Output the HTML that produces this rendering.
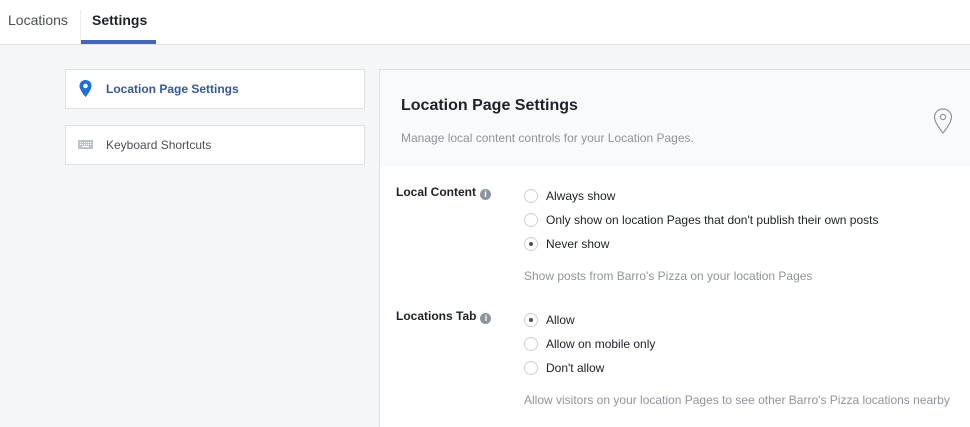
<!DOCTYPE html><html><head><style>
body{margin:0;width:970px;height:426px;overflow:hidden;background:#f5f6f7;font-family:"Liberation Sans",Arial,sans-serif;position:relative}
.a{position:absolute}
.top{left:0;top:0;width:970px;height:44px;background:#fff;border-bottom:1px solid #dddfe2}
.box{left:65px;width:298px;height:38px;background:#fff;border:1px solid #dddfe2}
.panel{left:379px;top:69px;width:591px;height:357px;background:#fff;border-left:1px solid #dddfe2;border-top:1px solid #dddfe2}
.hd{left:0;top:0;width:591px;height:97px;background:#f9fafb}
.r{width:12px;height:12px;border:1px solid #ccd0d5;border-radius:50%;background:#fff}
.r.on::after{content:"";position:absolute;left:4px;top:4px;width:4px;height:4px;border-radius:50%;background:#4b4f56}
.t{font-size:12px;color:#1d2129}
.g{font-size:12px;color:#90949c}
.lb{font-size:12px;font-weight:bold;color:#1d2129}
.i{display:inline-block;width:11px;height:11px;border-radius:50%;background:#8d949e;color:#fff;font-size:9px;text-align:center;line-height:11px;font-weight:bold;vertical-align:-1px;margin-left:4px}
</style></head><body>
<div class="a top"></div>
<div class="a" style="left:8px;top:12px;font-size:14px;color:#4b4f56">Locations</div>
<div class="a" style="left:80px;top:10px;width:1px;height:34px;background:#e9ebee"></div>
<div class="a" style="left:92px;top:12px;font-size:14px;font-weight:bold;color:#1d2129">Settings</div>
<div class="a" style="left:81px;top:40px;width:75px;height:4px;background:#4267b2"></div>

<div class="a box" style="top:69px"></div>
<svg class="a" style="left:79px;top:80px" width="13" height="17" viewBox="0 0 13 17"><path d="M6.5 0C3 0 0.5 2.6 0.5 6c0 4 6 11 6 11s6-7 6-11C12.5 2.6 10 0 6.5 0z" fill="#1d6fd6"/><circle cx="6.5" cy="6" r="2.3" fill="#fff"/></svg>
<div class="a" style="left:106px;top:82px;font-size:12px;font-weight:bold;color:#365899">Location Page Settings</div>
<div class="a box" style="top:125px"></div>
<svg class="a" style="left:78px;top:140px" width="15" height="9"><rect width="15" height="9" fill="#bec3c9"/><g fill="#fff"><rect x="2" y="2" width="1" height="1"/><rect x="4" y="2" width="1" height="1"/><rect x="6" y="2" width="1" height="1"/><rect x="8" y="2" width="1" height="1"/><rect x="10" y="2" width="1" height="1"/><rect x="12" y="2" width="1" height="1"/><rect x="2" y="4" width="1" height="1"/><rect x="4" y="4" width="1" height="1"/><rect x="6" y="4" width="1" height="1"/><rect x="8" y="4" width="1" height="1"/><rect x="10" y="4" width="1" height="1"/><rect x="12" y="4" width="1" height="1"/><rect x="4" y="6" width="7" height="1"/></g></svg>
<div class="a" style="left:106px;top:138px;font-size:12px;color:#4b4f56">Keyboard Shortcuts</div>

<div class="a panel">
<div class="a hd"></div>
<div class="a" style="left:21px;top:27px;font-size:16px;font-weight:bold;color:#1d2129">Location Page Settings</div>
<div class="a g" style="left:21px;top:61px">Manage local content controls for your Location Pages.</div>
<svg class="a" style="left:553px;top:38px" width="20" height="26" viewBox="0 0 20 26"><path d="M10 1C5.2 1 1.5 4.6 1.5 9.2 1.5 15 10 25 10 25s8.5-10 8.5-15.8C18.5 4.6 14.8 1 10 1z" fill="none" stroke="#8d949e" stroke-width="1.2"/><circle cx="10" cy="9" r="2.6" fill="none" stroke="#8d949e" stroke-width="1.2"/></svg>
</div>

<div class="a lb" style="left:396px;top:185px">Local Content<span class="i">i</span></div>
<div class="a r" style="left:524px;top:189px"></div><div class="a t" style="left:546px;top:189px">Always show</div>
<div class="a r" style="left:524px;top:213px"></div><div class="a t" style="left:546px;top:213px">Only show on location Pages that don't publish their own posts</div>
<div class="a r on" style="left:524px;top:237px"></div><div class="a t" style="left:546px;top:237px">Never show</div>
<div class="a g" style="left:524px;top:269px">Show posts from Barro's Pizza on your location Pages</div>

<div class="a lb" style="left:396px;top:309px">Locations Tab<span class="i">i</span></div>
<div class="a r on" style="left:524px;top:313px"></div><div class="a t" style="left:546px;top:313px">Allow</div>
<div class="a r" style="left:524px;top:337px"></div><div class="a t" style="left:546px;top:337px">Allow on mobile only</div>
<div class="a r" style="left:524px;top:361px"></div><div class="a t" style="left:546px;top:361px">Don't allow</div>
<div class="a g" style="left:524px;top:393px">Allow visitors on your location Pages to see other Barro's Pizza locations nearby</div>
</body></html>
